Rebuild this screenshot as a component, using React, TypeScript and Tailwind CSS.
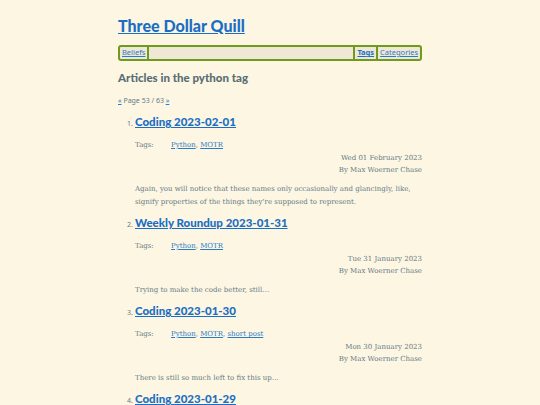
import React from 'react';

const POSTS = [
    {
        n: 1,
        title: 'Coding 2023-02-01',
        tags: ['Python', 'MOTR'],
        date: 'Wed 01 February 2023',
        summary: 'Again, you will notice that these names only occasionally and glancingly, like, signify properties of the things they\u2019re supposed to represent.',
    },
    {
        n: 2,
        title: 'Weekly Roundup 2023-01-31',
        tags: ['Python', 'MOTR'],
        date: 'Tue 31 January 2023',
        summary: 'Trying to make the code better, still\u2026',
    },
    {
        n: 3,
        title: 'Coding 2023-01-30',
        tags: ['Python', 'MOTR', 'short post'],
        date: 'Mon 30 January 2023',
        summary: 'There is still so much left to fix this up\u2026',
    },
    {
        n: 4,
        title: 'Coding 2023-01-29',
        tags: ['Python', 'MOTR'],
        date: 'Sun 29 January 2023',
        summary: 'More work.',
    },
];

const heading = { fontFamily: 'Lato, "Noto Sans", sans-serif' };
const sans = { fontFamily: '"Noto Sans", "Open Sans", sans-serif' };
const serif = { fontFamily: '"DejaVu Serif", "Liberation Serif", serif' };

export default function App() {
    return (
        <div className="h-[405px] overflow-hidden bg-[#fdf6e3] text-[#657b83]" style={serif}>
            <div className="w-[304px] mx-auto pt-[14px]">
                <h1 className="text-[16px] font-black leading-[24px] text-[#1a6fc4] underline" style={heading}>
                    Three Dollar Quill
                </h1>

                {/* Nav bar */}
                <nav
                    className="mt-[7px] flex items-center h-[16px] border-2 border-[#6f9a1e] rounded-[3px] bg-[#eee8d5] text-[7.5px] leading-none text-[#2a7bc8]"
                    style={sans}
                >
                    <a className="underline px-[2px]">Beliefs</a>
                    <span className="w-[2px] h-[12px] bg-[#6f9a1e]"></span>
                    <span className="flex-1"></span>
                    <span className="w-[2px] h-[12px] bg-[#6f9a1e]"></span>
                    <a className="underline font-bold px-[2px] text-[#1a6fc4]">Tags</a>
                    <span className="w-[2px] h-[12px] bg-[#6f9a1e]"></span>
                    <a className="underline px-[2px]">Categories</a>
                </nav>

                <h2 className="mt-[8px] text-[11.5px] font-black leading-[18px] text-[#586e75]" style={heading}>
                    Articles in the python tag
                </h2>

                <p className="mt-[9px] text-[7px] leading-[10px] text-[#657b83]" style={sans}>
                    <a className="underline text-[#2a7bc8]">&laquo;</a> Page 53 / 63{' '}
                    <a className="underline text-[#2a7bc8]">&raquo;</a>
                </p>

                <ol className="mt-[7px] pl-[17px]">
                    {POSTS.map((p) => (
                        <li key={p.n} className="mb-[5px]">
                            <div className="flex items-baseline">
                                <span className="w-[8px] -ml-[8px] text-[7px]" style={sans}>{p.n}.</span>
                                <a className="text-[11.5px] font-black leading-[18px] text-[#1a6fc4] underline" style={heading}>
                                    {p.title}
                                </a>
                            </div>
                            <div className="mt-[8px] flex text-[7px] leading-[12px]">
                                <span className="w-[36px]">Tags:</span>
                                <span>
                                    {p.tags.map((t, i) => (
                                        <React.Fragment key={t}>
                                            {i > 0 && ', '}
                                            <a className="underline text-[#2a7bc8]">{t}</a>
                                        </React.Fragment>
                                    ))}
                                </span>
                            </div>
                            <div className="mt-[1px] text-right text-[7px] leading-[12px]">
                                <div>{p.date}</div>
                                <div>By Max Woerner Chase</div>
                            </div>
                            <p className="mt-[7px] text-[7px] leading-[13px]">{p.summary}</p>
                        </li>
                    ))}
                </ol>
            </div>
        </div>
    );
}
